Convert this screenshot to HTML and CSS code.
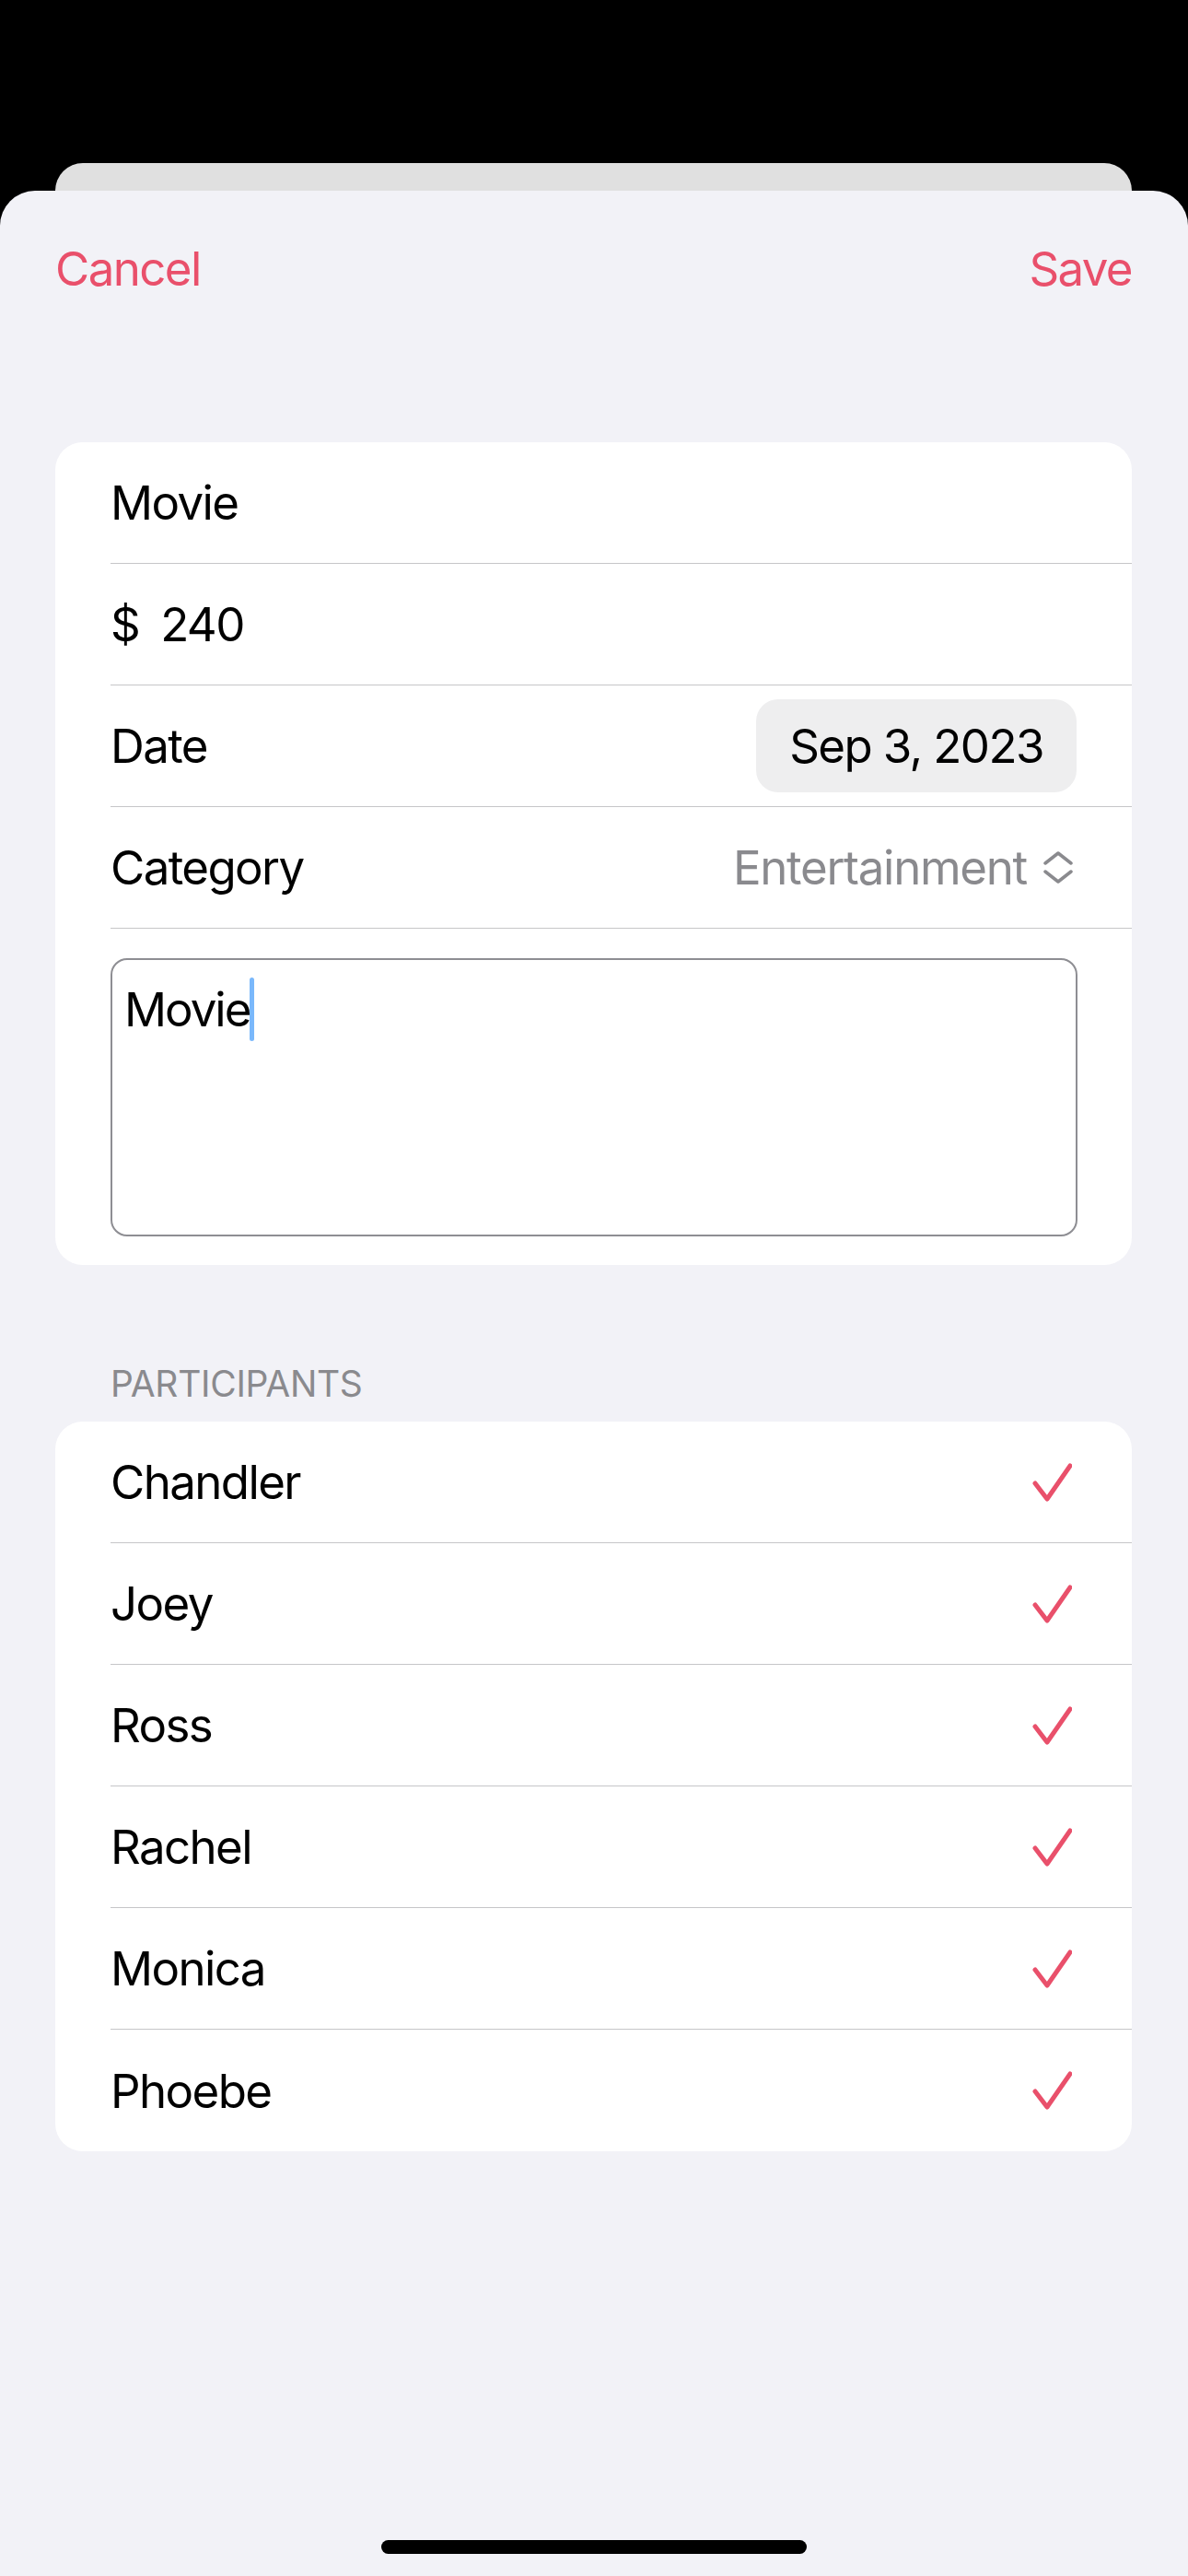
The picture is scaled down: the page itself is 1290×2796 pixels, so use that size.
FILE: index.html
```html
<!DOCTYPE html>
<html>
<head>
<meta charset="utf-8">
<link rel="stylesheet" href="styles.css">
</head>
<body>
<div class="screen">
  <div class="peek"></div>
  <div class="sheet">
    <div class="nav">
      <span class="nav-btn">Cancel</span>
      <span class="nav-btn">Save</span>
    </div>

    <div class="card form-card">
      <div class="row"><span>Movie</span></div>
      <div class="row"><span class="amount"><span class="cur">$</span>240</span></div>
      <div class="row">
        <span>Date</span>
        <span class="pill">Sep 3, 2023</span>
      </div>
      <div class="row">
        <span>Category</span>
        <span class="picker">Entertainment
          <svg class="updown" width="32" height="36" viewBox="0 0 32 36"><path d="M2 13 L16 2 L30 13 M2 22 L16 33 L30 22" fill="none" stroke="#8a8a8e" stroke-width="3.5" stroke-linecap="round" stroke-linejoin="round"/></svg>
        </span>
      </div>
      <div class="note-wrap">
        <div class="note"><span class="note-text">Movie</span><span class="caret"></span></div>
      </div>
    </div>

    <div class="section-header">PARTICIPANTS</div>
    <div class="card">
      <div class="row"><span>Chandler</span><svg class="check" width="44" height="44" viewBox="0 0 44 44"><path d="M4 23 L17 40 L42 4" fill="none" stroke="#e9506b" stroke-width="5" stroke-linecap="round" stroke-linejoin="round"/></svg></div>
      <div class="row"><span>Joey</span><svg class="check" width="44" height="44" viewBox="0 0 44 44"><path d="M4 23 L17 40 L42 4" fill="none" stroke="#e9506b" stroke-width="5" stroke-linecap="round" stroke-linejoin="round"/></svg></div>
      <div class="row"><span>Ross</span><svg class="check" width="44" height="44" viewBox="0 0 44 44"><path d="M4 23 L17 40 L42 4" fill="none" stroke="#e9506b" stroke-width="5" stroke-linecap="round" stroke-linejoin="round"/></svg></div>
      <div class="row"><span>Rachel</span><svg class="check" width="44" height="44" viewBox="0 0 44 44"><path d="M4 23 L17 40 L42 4" fill="none" stroke="#e9506b" stroke-width="5" stroke-linecap="round" stroke-linejoin="round"/></svg></div>
      <div class="row"><span>Monica</span><svg class="check" width="44" height="44" viewBox="0 0 44 44"><path d="M4 23 L17 40 L42 4" fill="none" stroke="#e9506b" stroke-width="5" stroke-linecap="round" stroke-linejoin="round"/></svg></div>
      <div class="row last"><span>Phoebe</span><svg class="check" width="44" height="44" viewBox="0 0 44 44"><path d="M4 23 L17 40 L42 4" fill="none" stroke="#e9506b" stroke-width="5" stroke-linecap="round" stroke-linejoin="round"/></svg></div>
    </div>

    <div class="home-indicator"></div>
  </div>
</div>
</body>
</html>
```

FILE: styles.css
```css
html, body {
  margin: 0;
  padding: 0;
  background: #000;
}
body {
  font-family: Inter, "Liberation Sans", sans-serif;
  font-size: 51px;
  letter-spacing: -1.6px;
  color: #000;
}
.screen {
  width: 1290px;
  height: 2796px;
  display: flex;
  flex-direction: column;
  background: #000;
  overflow: hidden;
}
.peek {
  margin: 177px 61px 0 60px;
  height: 30px;
  background: #e0e0e0;
  border-radius: 34px 34px 0 0;
  flex: none;
}
.sheet {
  flex: 1;
  background: #f2f2f7;
  border-radius: 38px 38px 0 0;
  display: flex;
  flex-direction: column;
}
.nav {
  display: flex;
  justify-content: space-between;
  padding: 54px 61px 0 60px;
  height: 61px;
  line-height: 61px;
}
.nav-btn {
  color: #e9506b;
}
.card {
  background: #fff;
  border-radius: 30px;
  margin: 0 61px 0 60px;
  overflow: hidden;
}
.form-card {
  margin-top: 158px;
}
.row {
  height: 131px;
  margin-left: 60px;
  padding-right: 60px;
  border-bottom: 1px solid #c6c6c8;
  display: flex;
  align-items: center;
  justify-content: space-between;
  line-height: 61px;
}
.row.last {
  border-bottom: none;
  height: 132px;
}
.cur {
  margin-right: 23px;
}
.pill {
  background: #eeeeef;
  border-radius: 24px;
  height: 101px;
  width: 348px;
  display: flex;
  align-items: center;
  justify-content: center;
}
.picker {
  color: #8a8a8e;
  display: flex;
  align-items: center;
  margin-right: 4px;
  letter-spacing: -1.3px;
}
.updown {
  margin-left: 18px;
}
.note-wrap {
  padding: 32px 59px 31px 60px;
}
.note {
  box-sizing: border-box;
  height: 302px;
  border: 2px solid #8e8e93;
  border-radius: 18px;
  padding: 23px 13px 0 13px;
  line-height: 61px;
  display: flex;
  align-items: flex-start;
}
.note-text {
  letter-spacing: -2px;
}
.caret {
  display: inline-block;
  width: 5px;
  height: 69px;
  background: #7ab8fb;
  border-radius: 3px;
  margin-top: -4px;
  margin-left: 0;
}
.section-header {
  margin: 106px 60px 18px 120px;
  font-size: 39px;
  line-height: 46px;
  letter-spacing: -0.3px;
  color: #8a8a8e;
}
.check {
  margin-right: 5px;
}
.home-indicator {
  margin: auto auto 24px auto;
  width: 462px;
  height: 15px;
  border-radius: 8px;
  background: #000;
}
```
